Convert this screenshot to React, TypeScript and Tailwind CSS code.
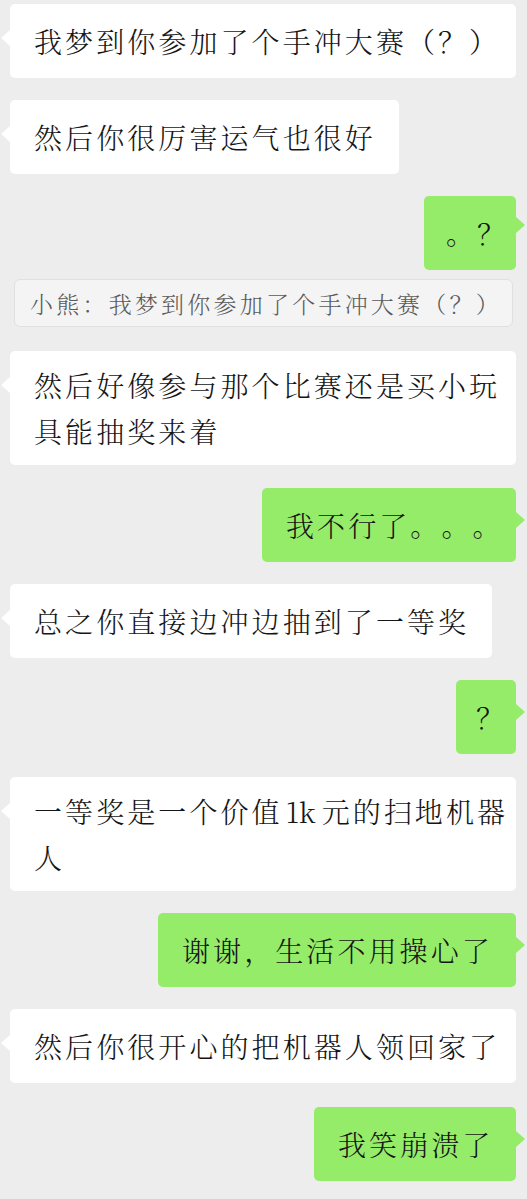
import React from "react";

type Msg = {
  side: "l" | "r" | "q";
  text: React.ReactNode;
  mt: string;
  w: string;
  py?: string;
  pl?: string;
  tail?: string;
};

const msgs: Msg[] = [
  { side: "l", text: "我梦到你参加了个手冲大赛（？）", mt: "mt-[4px]", w: "w-[506px]" },
  { side: "l", text: "然后你很厉害运气也很好", mt: "mt-[22px]", w: "w-[389px]" },
  { side: "r", text: "。？", mt: "mt-[22px]", w: "w-[92px]", pl: "pl-[22px]", tail: "top-[21px]" },
  { side: "q", text: "小熊：我梦到你参加了个手冲大赛（？）", mt: "mt-[9px]", w: "w-[499px]" },
  { side: "l", text: "然后好像参与那个比赛还是买小玩具能抽奖来着", mt: "mt-[24px]", w: "w-[506px]", py: "py-[11px]" },
  { side: "r", text: "我不行了。。。", mt: "mt-[23px]", w: "w-[254px]", tail: "top-[24px]" },
  { side: "l", text: "总之你直接边冲边抽到了一等奖", mt: "mt-[22px]", w: "w-[482px]" },
  { side: "r", text: "？", mt: "mt-[22px]", w: "w-[60px]", pl: "pl-[20px]", tail: "top-[24px]" },
  {
    side: "l",
    text: (
      <>
        <span>一等奖是一个价值</span>
        <span className="ml-[3px] mr-[6px] tracking-normal">1k</span>
        <span>元的扫地机器</span>
        <span>人</span>
      </>
    ),
    mt: "mt-[23px]",
    w: "w-[506px]",
    py: "py-[11px]",
  },
  { side: "r", text: "谢谢，生活不用操心了", mt: "mt-[22px]", w: "w-[358px]", tail: "top-[24px]" },
  { side: "l", text: "然后你很开心的把机器人领回家了", mt: "mt-[22px]", w: "w-[506px]" },
  { side: "r", text: "我笑崩溃了", mt: "mt-[24px]", w: "w-[202px]", tail: "top-[24px]" },
];

const font = "[font-family:'Noto_Serif_CJK_SC','Noto_Sans_CJK_SC',serif]";

export default function App() {
  return (
    <div className={`min-h-[1199px] w-[527px] bg-[#ededed] pb-[19px] ${font} [text-spacing-trim:space-all]`}>
      <div className="flex flex-col">
        {msgs.map((m, i) => {
          if (m.side === "q") {
            return (
              <div
                key={i}
                className={`${m.mt} ml-[14px] ${m.w} h-[48px] flex items-center rounded-[6px] border border-[#e0e0e0] bg-[#f4f4f4] pl-[15px] text-[23px] leading-none tracking-[0.14em] text-[#5a5a5a] whitespace-nowrap font-light`}
              >
                {m.text}
              </div>
            );
          }
          const left = m.side === "l";
          return (
            <div key={i} className={`${m.mt} flex ${left ? "justify-start pl-[10px]" : "justify-end pr-[11px]"}`}>
              <div
                className={`relative ${m.w} ${m.py ?? "py-[14px]"} ${m.pl ?? "pl-[24px]"} pr-[4px] rounded-[5px] text-[28px] leading-[46px] tracking-[0.11em] text-[#151515] break-all font-light ${left ? "bg-white" : "bg-[#95ec69]"}`}
              >
                {left ? (
                  <span className="absolute -left-[9px] top-[26px] h-0 w-0 border-y-[8px] border-r-[9px] border-y-transparent border-r-white" />
                ) : (
                  <span
                    className={`absolute -right-[9px] ${m.tail ?? "top-[24px]"} h-0 w-0 border-y-[8px] border-l-[9px] border-y-transparent border-l-[#95ec69]`}
                  />
                )}
                <span className={left ? "" : "whitespace-nowrap"}>{m.text}</span>
              </div>
            </div>
          );
        })}
      </div>
    </div>
  );
}
